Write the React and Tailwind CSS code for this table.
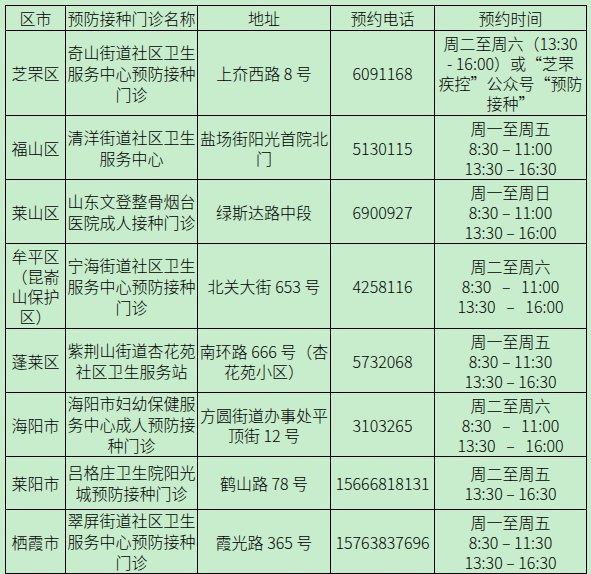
import React from 'react';

const rows = [
  {
    h: 'h-[85px]',
    area: ['芝罘区'],
    name: ['奇山街道社区卫生', '服务中心预防接种', '门诊'],
    addr: ['上夼西路 8 号'],
    phone: '6091168',
    time: ['周二至周六（13:30', '- 16:00）或“芝罘', '疾控”公众号“预防', '接种”'],
  },
  {
    h: 'h-[64px]',
    area: ['福山区'],
    name: ['清洋街道社区卫生', '服务中心'],
    addr: ['盐场街阳光首院北', '门'],
    phone: '5130115',
    time: ['周一至周五', '8:30 – 11:00', '13:30 – 16:30'],
  },
  {
    h: 'h-[64px]',
    area: ['莱山区'],
    name: ['山东文登整骨烟台', '医院成人接种门诊'],
    addr: ['绿斯达路中段'],
    phone: '6900927',
    time: ['周一至周日', '8:30 – 11:00', '13:30 – 16:00'],
  },
  {
    h: 'h-[85px]',
    area: ['牟平区', '（昆嵛', '山保护', '区）'],
    name: ['宁海街道社区卫生', '服务中心预防接种', '门诊'],
    addr: ['北关大街 653 号'],
    phone: '4258116',
    time: ['周二至周六', '8:30   –   11:00', '13:30   –   16:00'],
  },
  {
    h: 'h-[64px]',
    area: ['蓬莱区'],
    name: ['紫荆山街道杏花苑', '社区卫生服务站'],
    addr: ['南环路 666 号（杏', '花苑小区）'],
    phone: '5732068',
    time: ['周一至周五', '8:30 – 11:30', '13:30 – 16:30'],
  },
  {
    h: 'h-[64px]',
    area: ['海阳市'],
    name: ['海阳市妇幼保健服', '务中心成人预防接', '种门诊'],
    addr: ['方圆街道办事处平', '顶街 12 号'],
    phone: '3103265',
    time: ['周二至周六', '8:30   –   11:00', '13:30   –   16:00'],
  },
  {
    h: 'h-[53px]',
    area: ['莱阳市'],
    name: ['吕格庄卫生院阳光', '城预防接种门诊'],
    addr: ['鹤山路 78 号'],
    phone: '15666818131',
    time: ['周二至周五', '13:30 – 16:30'],
  },
  {
    h: 'h-[63px]',
    area: ['栖霞市'],
    name: ['翠屏街道社区卫生', '服务中心预防接种', '门诊'],
    addr: ['霞光路 365 号'],
    phone: '15763837696',
    time: ['周一至周五', '8:30 – 11:30', '13:30 – 16:30'],
  },
];

const Lines = ({ lines }) => (
  <>
    {lines.map((l, i) => (
      <div key={i} className="whitespace-pre">
        {l}
      </div>
    ))}
  </>
);

const cell = 'border border-black p-0 text-center align-middle';

export default function App() {
  return (
    <div
      className="w-[591px] h-[574px] bg-[#C7EDCC] pt-[5px] pl-[5px] text-black text-[16px] leading-[20px] font-light"
      style={{ fontFamily: '"Noto Sans CJK SC", "Noto Sans", sans-serif' }}
    >
      <table className="table-fixed border-collapse w-[581px]">
        <colgroup>
          <col className="w-[60px]" />
          <col className="w-[132px]" />
          <col className="w-[133px]" />
          <col className="w-[104px]" />
          <col className="w-[152px]" />
        </colgroup>
        <thead>
          <tr className="h-[25px]">
            <th className={`${cell} font-light`}>区市</th>
            <th className={`${cell} font-light`}>预防接种门诊名称</th>
            <th className={`${cell} font-light`}>地址</th>
            <th className={`${cell} font-light`}>预约电话</th>
            <th className={`${cell} font-light`}>预约时间</th>
          </tr>
        </thead>
        <tbody>
          {rows.map((r) => (
            <tr key={r.phone} className={r.h}>
              <td className={cell}>
                <Lines lines={r.area} />
              </td>
              <td className={`${cell} leading-[21px]`}>
                <Lines lines={r.name} />
              </td>
              <td className={cell}>
                <Lines lines={r.addr} />
              </td>
              <td className={cell}>{r.phone}</td>
              <td className={cell}>
                <Lines lines={r.time} />
              </td>
            </tr>
          ))}
        </tbody>
      </table>
    </div>
  );
}
